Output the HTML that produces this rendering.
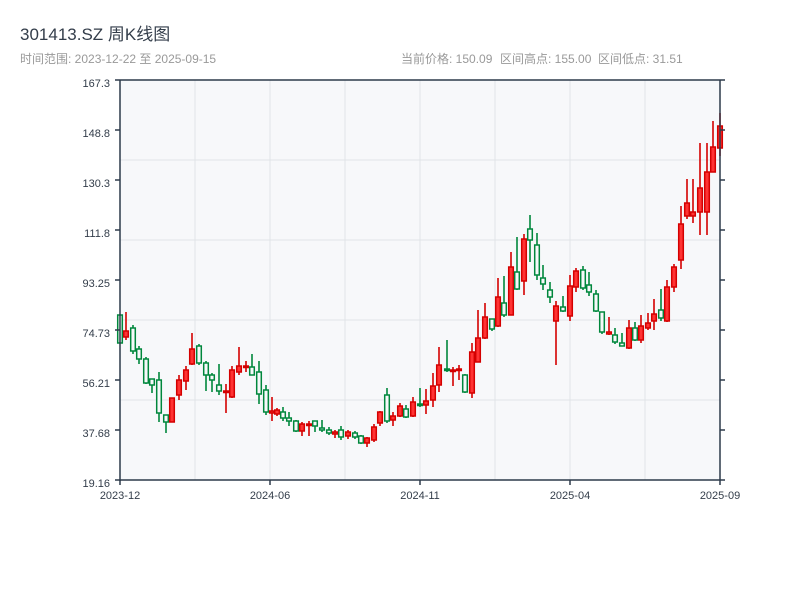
<!DOCTYPE html>
<html><head><meta charset="utf-8"><style>
html,body{margin:0;padding:0;background:#fff;}
body{width:800px;height:600px;overflow:hidden;font-family:"Liberation Sans","Noto Sans CJK SC",sans-serif;}
</style></head><body>
<svg id="svg" width="800" height="600" xmlns="http://www.w3.org/2000/svg" style="display:block">
<text x="20" y="40" font-size="17" fill="#333d4a" font-family="Liberation Sans, Noto Sans CJK SC, sans-serif">301413.SZ 周K线图</text>
<text x="20" y="63" font-size="12" fill="#999" font-family="Liberation Sans, Noto Sans CJK SC, sans-serif">时间范围: 2023-12-22 至 2025-09-15</text>
<g font-size="12" fill="#999" font-family="Liberation Sans, Noto Sans CJK SC, sans-serif">
<text x="401" y="63">当前价格: 150.09</text>
<text x="500" y="63">区间高点: 155.00</text>
<text x="598" y="63">区间低点: 31.51</text>
</g>
<rect x="120" y="80" width="600" height="400" fill="#f7f8fa"/>
<g stroke="#e1e4e8" stroke-width="1">
<line x1="195" y1="80" x2="195" y2="480"/><line x1="270" y1="80" x2="270" y2="480"/><line x1="345" y1="80" x2="345" y2="480"/><line x1="420" y1="80" x2="420" y2="480"/><line x1="495" y1="80" x2="495" y2="480"/><line x1="570" y1="80" x2="570" y2="480"/><line x1="645" y1="80" x2="645" y2="480"/>
<line x1="120" y1="160" x2="720" y2="160"/><line x1="120" y1="240" x2="720" y2="240"/><line x1="120" y1="320" x2="720" y2="320"/><line x1="120" y1="400" x2="720" y2="400"/>
</g>
<g id="c"></g>
<g stroke="#2d3a4a" stroke-width="1.5" fill="none">
<line x1="120" y1="80" x2="720" y2="80"/><line x1="120" y1="80" x2="120" y2="481"/><line x1="120" y1="480" x2="720" y2="480"/><line x1="720" y1="80" x2="720" y2="480"/>
<line x1="115" y1="80" x2="120" y2="80"/><line x1="115" y1="130" x2="120" y2="130"/><line x1="115" y1="180" x2="120" y2="180"/><line x1="115" y1="230" x2="120" y2="230"/><line x1="115" y1="280" x2="120" y2="280"/><line x1="115" y1="330" x2="120" y2="330"/><line x1="115" y1="380" x2="120" y2="380"/><line x1="115" y1="430" x2="120" y2="430"/><line x1="115" y1="480" x2="120" y2="480"/>
<line x1="720" y1="80" x2="725" y2="80"/><line x1="720" y1="130" x2="725" y2="130"/><line x1="720" y1="180" x2="725" y2="180"/><line x1="720" y1="230" x2="725" y2="230"/><line x1="720" y1="280" x2="725" y2="280"/><line x1="720" y1="330" x2="725" y2="330"/><line x1="720" y1="380" x2="725" y2="380"/><line x1="720" y1="430" x2="725" y2="430"/><line x1="720" y1="480" x2="725" y2="480"/>
<line x1="120" y1="480" x2="120" y2="485"/><line x1="270" y1="480" x2="270" y2="485"/><line x1="420" y1="480" x2="420" y2="485"/><line x1="570" y1="480" x2="570" y2="485"/><line x1="720" y1="480" x2="720" y2="485"/>
</g>
<g font-size="11" fill="#333d4a" text-anchor="end" font-family="Liberation Sans, sans-serif">
<text x="110" y="87">167.3</text><text x="110" y="137">148.8</text><text x="110" y="187">130.3</text><text x="110" y="237">111.8</text><text x="110" y="287">93.25</text><text x="110" y="337">74.73</text><text x="110" y="387">56.21</text><text x="110" y="437">37.68</text><text x="110" y="487">19.16</text>
</g>
<g font-size="11" fill="#333d4a" text-anchor="middle" font-family="Liberation Sans, sans-serif">
<text x="120" y="499">2023-12</text><text x="270" y="499">2024-06</text><text x="420" y="499">2024-11</text><text x="570" y="499">2025-04</text><text x="720" y="499">2025-09</text>
</g>
</svg>
<script>
var d=[
[120,315,343,315,343,'g'],[126,331,337,312,340,'r'],[133,328,351,325,354,'g'],[139,349,359,346,364,'g'],[146,359,383,357,384,'g'],[152,379,385,379,393,'g'],[159,380,413,372,422,'g'],[166,415,422,415,433,'g'],[172,398,422,398,422,'r'],[179,380,395,375,400,'r'],[186,370,381,366,390,'r'],[192,349,364,333,365,'r'],[199,346,363,344,365,'g'],[206,363,375,361,391,'g'],[212,375,380,373,392,'g'],[219,385,391,364,395,'g'],[226,391,392,384,413,'r'],[232,370,397,366,398,'r'],[239,366,372,347,375,'r'],[246,366,367,361,372,'r'],[252,367,375,354,375,'g'],[259,372,394,361,404,'g'],[266,390,412,385,415,'g'],[272,411,413,397,421,'r'],[277,410,414,408,416,'r'],
[283,412,418,407,421,'g'],[289,418,421,412,426,'g'],[296,421,431,420,432,'g'],[302,424,431,422,436,'r'],[309,424,425,421,436,'r'],[315,421,426,421,432,'g'],[322,428,430,420,432,'g'],[329,430,433,427,435,'g'],[335,432,434,430,438,'r'],[341,430,437,426,440,'g'],[348,432,436,430,439,'r'],[355,433,437,431,439,'g'],[361,436,443,435,444,'g'],[367,438,443,437,447,'r'],[374,427,440,424,442,'r'],[380,412,423,411,426,'r'],[387,395,421,388,423,'g'],[393,416,420,412,426,'r'],[400,406,416,403,417,'r'],[406,409,417,405,418,'g'],[413,402,416,397,417,'r'],[420,404,405,388,407,'g'],[426,401,405,389,414,'r'],[433,386,400,373,407,'r'],[439,365,385,347,392,'r'],[447,369,370,340,372,'g'],[453,370,371,367,386,'r'],[459,369,370,365,380,'r'],[465,375,392,374,393,'g'],
[472,352,393,343,398,'r'],[478,338,362,310,362,'r'],[485,317,338,303,339,'r'],[492,319,329,319,331,'g'],[498,297,326,278,327,'r'],[504,303,315,276,317,'g'],[511,267,315,252,315,'r'],[517,272,289,237,290,'g'],[524,239,281,234,295,'r'],[530,229,240,215,262,'g'],[537,245,275,233,280,'g'],[543,278,284,265,290,'g'],[550,290,297,282,303,'g'],[556,306,321,301,365,'r'],[563,307,311,296,312,'g'],[570,286,316,275,321,'r'],[576,271,287,268,292,'r'],[583,270,288,266,290,'g'],[589,285,292,272,296,'g'],[596,294,311,290,312,'g'],[602,312,332,312,334,'g'],[609,332,334,317,335,'r'],[615,335,342,328,344,'g'],
[622,343,346,333,346,'g'],[629,328,348,320,349,'r'],[635,328,340,322,341,'g'],[641,326,340,315,343,'r'],[648,323,328,313,330,'r'],[654,314,321,299,330,'r'],[661,310,318,289,321,'g'],[667,287,321,280,322,'r'],[674,267,287,264,292,'r'],[681,224,260,206,269,'r'],[687,203,216,179,219,'r'],[693,212,216,179,223,'r'],[700,188,212,143,235,'r'],[707,172,212,143,235,'r'],[713,147,172,121,172,'r'],[720,126,148,113,156,'r']];
var NS='http://www.w3.org/2000/svg',g=document.getElementById('c');
function el(n,a){var e=document.createElementNS(NS,n);for(var k in a)e.setAttribute(k,a[k]);g.appendChild(e);}
d.forEach(function(a){var x=a[0],c=a[5]=='r'?'#d40000':'#00873c',f=a[5]=='r'?'#ff3333':'#f7f8fa';var h=Math.max(a[2]-a[1],1.5);
el('line',{x1:x,y1:a[3],x2:x,y2:a[4],stroke:c,'stroke-width':1.6});
el('rect',{x:x-2.3,y:a[1],width:4.6,height:h,fill:f,stroke:c,'stroke-width':1.5});});
</script>
</body></html>
